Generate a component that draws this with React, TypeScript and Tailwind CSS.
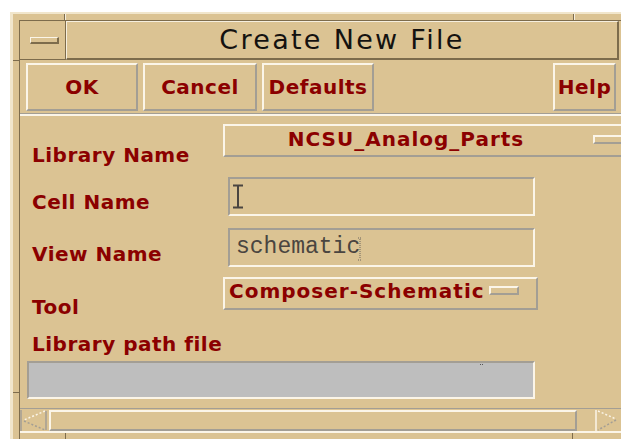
import React from "react";

// Motif-style "Create New File" form
const tan = "bg-[#dbc393]";
const raised =
  "border-2 border-t-[#fbf5e8] border-l-[#fbf5e8] border-b-[#a39e94] border-r-[#a39e94]";
const sunken =
  "border-2 border-t-[#a39e94] border-l-[#a39e94] border-b-[#fbf5e8] border-r-[#fbf5e8]";
const labelText = "text-[20px] leading-[20px] font-bold tracking-[0.5px] text-[#8b0000]";

function PushButton({ label, width }: { label: string; width: string }) {
  return (
    <div className={`${width} h-[48px] flex items-center justify-center ${raised} ${labelText}`}>
      {label}
    </div>
  );
}

function Label({ text, top }: { text: string; top: string }) {
  return <div className={`w-[196px] shrink-0 pl-[5px] ${top} ${labelText}`}>{text}</div>;
}

function CycleMark() {
  return (
    <div className="w-[30px] h-[9px] border-t-2 border-l-2 border-b-2 border-r-2 border-t-[#fbf5e8] border-l-[#fbf5e8] border-b-[#a39e94] border-r-[#a39e94]" />
  );
}

function IBeam() {
  return (
    <svg width="12" height="25" viewBox="0 0 12 25" className="ml-[1px]">
      <path d="M1 1.5H11M6 1.5V23.5M1 23.5H11" stroke="#4a4540" strokeWidth="2" fill="none" />
    </svg>
  );
}

function DotCursor() {
  return (
    <svg width="6" height="24" viewBox="0 0 6 24" className="-ml-[3px] mt-[2px]">
      <path d="M1 1H5M3 2V22M1 23H5" stroke="#6a655c" strokeWidth="1" strokeDasharray="1 1" fill="none" />
    </svg>
  );
}

export default function App() {
  return (
    <div className="w-[621px] h-[439px] bg-white overflow-hidden pt-[12px] pl-[10px] font-['DejaVu_Sans',sans-serif]">
      <div className={`h-full ${tan} flex flex-col`}>
        {/* top frame strip */}
        <div className="flex h-[8px] border-t-2 border-[#f1e6cc]">
          <div className="w-[55px] border-r border-r-[#7d6c4c] border-l-[3px] border-l-[#f1e6cc]" />
          <div className="w-[1px] bg-[#f6efdf]" />
          <div className="flex-1" />
          <div className="w-[1px] bg-[#7d6c4c]" />
          <div className="w-[1px] bg-[#f6efdf]" />
          <div className="w-[46px]" />
        </div>

        <div className="flex flex-1 min-h-0">
          {/* left frame */}
          <div className="w-[10px] flex flex-col border-l-[3px] border-[#f1e6cc]">
            <div className="h-[41px] border-b border-[#7d6c4c] border-r border-r-[#7d6c4c]" />
            <div className="h-[332px] border-b border-[#7d6c4c] border-r border-r-[#7d6c4c]" />
            <div className="flex-1 border-r border-r-[#7d6c4c]" />
          </div>

          {/* window contents */}
          <div className="flex-1 flex flex-col border-t border-[#7d6c4c]">
            {/* title bar */}
            <div className="flex h-[41px]">
              <div className="w-[46px] flex items-center pl-[10px] border-r border-b border-[#7d6c4c]">
                <div className="w-[29px] h-[7px] border-t border-l border-t-[#fbf5e8] border-l-[#fbf5e8] border-b-2 border-r-2 border-b-[#7d6c4c] border-r-[#7d6c4c]" />
              </div>
              <div className="flex-1 flex items-center justify-center border-l border-t border-l-[#f6efdf] border-t-[#f6efdf] border-r-2 border-b-2 border-r-[#7d6c4c] border-b-[#7d6c4c] text-[27px] leading-[27px] tracking-[2.3px] text-[#141210] pb-[2px]">
                Create New File
              </div>
              <div className="w-[2px]" />
            </div>

            {/* action buttons */}
            <div className="flex mt-[3px] pl-[6px] pr-[5px] gap-[5px]">
              <PushButton label="OK" width="w-[112px]" />
              <PushButton label="Cancel" width="w-[114px]" />
              <PushButton label="Defaults" width="w-[112px]" />
              <div className="flex-1" />
              <PushButton label="Help" width="w-[63px]" />
            </div>

            <div className="mt-[2px] border-t border-[#a39e94]" />
            <div className="border-t-2 border-[#fbf5e8]" />

            {/* form */}
            <div className="flex flex-col pl-[7px]">
              <div className="flex h-[33px] mt-[8px]">
                <Label text="Library Name" top="mt-[21px]" />
                <div className={`flex-1 -mr-[6px] flex items-center ${raised} border-r-0`}>
                  <div className="flex-1 text-center text-[20px] leading-[20px] font-bold tracking-[1px] text-[#8b0000] pr-[6px] -mt-[3px]">
                    NCSU_Analog_Parts
                  </div>
                  <div className="pr-[4px] -mt-[2px]">
                    <CycleMark />
                  </div>
                </div>
              </div>

              <div className="flex h-[39px] mt-[20px]">
                <Label text="Cell Name" top="mt-[15px]" />
                <div className={`ml-[5px] w-[307px] flex items-center pl-[1px] ${sunken}`}>
                  <IBeam />
                </div>
              </div>

              <div className="flex h-[39px] mt-[12px]">
                <Label text="View Name" top="mt-[16px]" />
                <div className={`ml-[5px] w-[307px] flex items-center pl-[6px] ${sunken}`}>
                  <span className="font-['Liberation_Mono',monospace] text-[23px] leading-[23px] text-[#4a4540]">
                    schematic
                  </span>
                  <DotCursor />
                </div>
              </div>

              <div className="flex h-[33px] mt-[10px]">
                <Label text="Tool" top="mt-[20px]" />
                <div className={`w-[315px] flex items-center pl-[4px] ${raised}`}>
                  <span className="text-[20px] leading-[20px] font-bold tracking-[1px] text-[#8b0000] -mt-[5px]">
                    Composer-Schematic
                  </span>
                  <div className="ml-[4px] -mt-[6px]">
                    <CycleMark />
                  </div>
                </div>
              </div>

              <div className={`mt-[24px] pl-[5px] ${labelText}`}>Library path file</div>

              <div className={`mt-[7px] w-[508px] h-[38px] bg-[#bebebe] ${sunken} flex justify-end pr-[50px] pt-[1px]`}>
                <div className="flex gap-[1px]">
                  <div className="w-[1px] h-[1px] bg-[#555]" />
                  <div className="w-[1px] h-[1px] bg-[#555]" />
                </div>
              </div>
            </div>

            {/* horizontal scrollbar */}
            <div className="mt-[9px] border-t border-[#a39e94]" />
            <div className="flex h-[23px] mt-[1px] border-b-2 border-[#fbf5e8]">
              <svg width="28" height="21" viewBox="0 0 28 21">
                <path d="M1 0V21" stroke="#a39e94" strokeWidth="1.5" />
                <path d="M25 1L4 10" stroke="#fbf5e8" strokeWidth="1.5" strokeDasharray="2 2" />
                <path d="M4 11L25 20" stroke="#a39e94" strokeWidth="1.5" strokeDasharray="2 2" />
                <path d="M26 1V20" stroke="#a39e94" strokeWidth="1.5" />
              </svg>
              <div className={`ml-[1px] w-[528px] h-[21px] ${raised}`} />
              <div className="w-[18px]" />
              <svg width="23" height="21" viewBox="0 0 23 21">
                <path d="M1 0V21" stroke="#fbf5e8" strokeWidth="1.5" />
                <path d="M3 1L21 9" stroke="#fbf5e8" strokeWidth="1.5" strokeDasharray="2 2" />
                <path d="M21 10L3 20" stroke="#a39e94" strokeWidth="1.5" strokeDasharray="2 2" />
              </svg>
            </div>
            <div className="flex h-[6px]">
              <div className="w-[46px] border-r border-[#7d6c4c]" />
              <div className="w-[507px] border-r border-[#7d6c4c]" />
            </div>
          </div>
        </div>
      </div>
    </div>
  );
}
